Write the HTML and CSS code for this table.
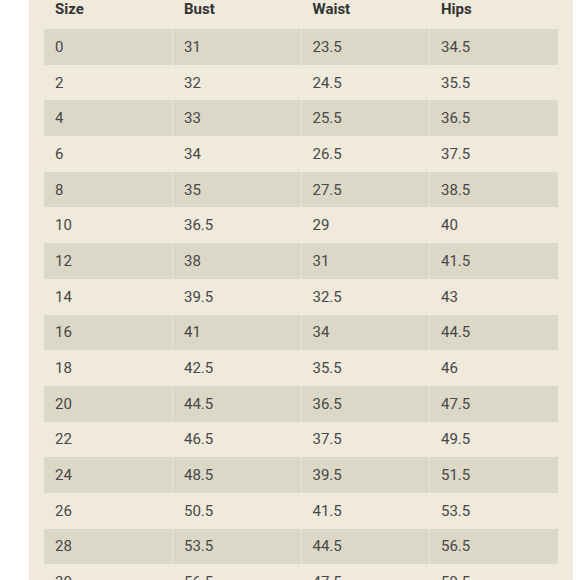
FILE: index.html
```html
<!DOCTYPE html>
<html>
<head>
<meta charset="utf-8">
<link rel="stylesheet" href="styles.css">
</head>
<body>
<div class="panel">
  <table class="sizes">
    <thead>
      <tr><th>Size</th><th>Bust</th><th>Waist</th><th>Hips</th></tr>
    </thead>
    <tbody>
      <tr><td>0</td><td>31</td><td>23.5</td><td>34.5</td></tr>
      <tr><td>2</td><td>32</td><td>24.5</td><td>35.5</td></tr>
      <tr><td>4</td><td>33</td><td>25.5</td><td>36.5</td></tr>
      <tr><td>6</td><td>34</td><td>26.5</td><td>37.5</td></tr>
      <tr><td>8</td><td>35</td><td>27.5</td><td>38.5</td></tr>
      <tr><td>10</td><td>36.5</td><td>29</td><td>40</td></tr>
      <tr><td>12</td><td>38</td><td>31</td><td>41.5</td></tr>
      <tr><td>14</td><td>39.5</td><td>32.5</td><td>43</td></tr>
      <tr><td>16</td><td>41</td><td>34</td><td>44.5</td></tr>
      <tr><td>18</td><td>42.5</td><td>35.5</td><td>46</td></tr>
      <tr><td>20</td><td>44.5</td><td>36.5</td><td>47.5</td></tr>
      <tr><td>22</td><td>46.5</td><td>37.5</td><td>49.5</td></tr>
      <tr><td>24</td><td>48.5</td><td>39.5</td><td>51.5</td></tr>
      <tr><td>26</td><td>50.5</td><td>41.5</td><td>53.5</td></tr>
      <tr><td>28</td><td>53.5</td><td>44.5</td><td>56.5</td></tr>
      <tr><td>30</td><td>56.5</td><td>47.5</td><td>59.5</td></tr>
    </tbody>
  </table>
</div>
</body>
</html>
```
FILE: styles.css
```css
html, body {
  margin: 0;
  padding: 0;
  background: #ffffff;
  height: 100%;
  overflow: hidden;
}

.panel {
  margin-left: 29px;
  width: 514px;
  min-height: 100%;
  padding: 0 15px;
  background: #efeadb;
  font-family: Roboto, "Liberation Sans", sans-serif;
}

.sizes {
  width: 514px;
  margin-top: -11px;
  border-collapse: collapse;
  table-layout: fixed;
  font-size: 15px;
}

.sizes th,
.sizes td {
  text-align: left;
  padding: 0 0 0 11px;
  border-left: 1px solid rgba(245, 241, 230, 0.55);
}

.sizes th:first-child,
.sizes td:first-child {
  border-left: none;
}

.sizes th {
  height: 40px;
  font-weight: 700;
  color: #333333;
}

.sizes td {
  height: 35.7px;
  color: #474747;
}

.sizes tbody tr:nth-child(odd) {
  background: #dcd8c7;
}
```
